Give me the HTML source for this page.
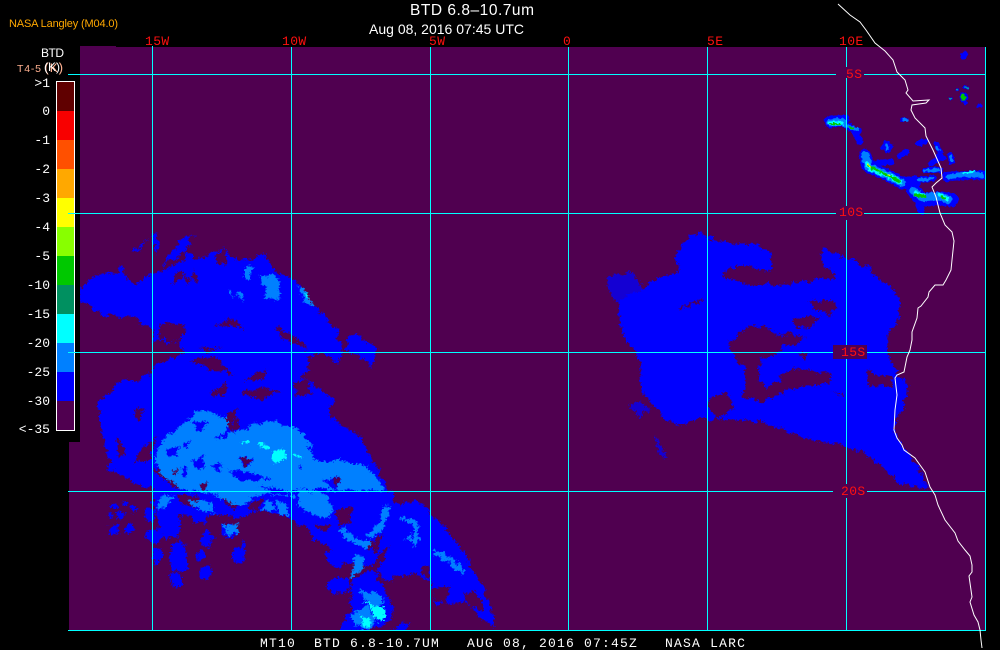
<!DOCTYPE html>
<html><head><meta charset="utf-8"><title>BTD 6.8-10.7um</title>
<style>
html,body{margin:0;padding:0;background:#000;width:1000px;height:650px;overflow:hidden}
svg{display:block}
text{white-space:pre}
.m{font-family:"Liberation Mono",monospace;font-size:13px}
.s{font-family:"Liberation Sans",sans-serif}
.r{fill:#ff1010}
.w{fill:#fff}
</style></head><body>
<svg width="1000" height="650" viewBox="0 0 1000 650" xmlns="http://www.w3.org/2000/svg">
<defs>
<filter id="f" filterUnits="userSpaceOnUse" x="0" y="0" width="1000" height="650" color-interpolation-filters="sRGB">
<feTurbulence type="fractalNoise" baseFrequency="0.14" numOctaves="3" seed="4" result="n"/>
<feDisplacementMap in="SourceGraphic" in2="n" scale="9" xChannelSelector="R" yChannelSelector="G" result="d"/>
<feTurbulence type="fractalNoise" baseFrequency="0.5" numOctaves="2" seed="11" result="n2"/>
<feDisplacementMap in="d" in2="n2" scale="6" xChannelSelector="G" yChannelSelector="R"/>
</filter>
<filter id="f2" filterUnits="userSpaceOnUse" x="0" y="0" width="1000" height="650" color-interpolation-filters="sRGB">
<feTurbulence type="fractalNoise" baseFrequency="0.3" numOctaves="2" seed="7" result="n"/>
<feDisplacementMap in="SourceGraphic" in2="n" scale="4" xChannelSelector="R" yChannelSelector="G"/>
</filter>
<clipPath id="c"><rect x="80" y="47" width="905" height="583"/><rect x="69" y="442" width="12" height="188"/></clipPath>
</defs>
<rect width="1000" height="650" fill="#000"/>
<rect x="80" y="47" width="905" height="583" fill="#500050"/>
<rect x="80" y="46" width="36" height="2" fill="#500050"/>
<rect x="69" y="442" width="12" height="188" fill="#500050"/>

<g clip-path="url(#c)">
<!-- right cloud -->
<g filter="url(#f)"><g transform="translate(600 220) scale(.33333)">
<path fill="#0000ff" d="M270 45 300 38 350 65 420 70 470 70 510 100 520 125 510 150 430 140 380 150 375 175 450 195 560 195 650 175 705 180 705 160 675 140 660 100 675 85 740 115 800 140 870 200 900 240 895 310 860 340 865 395 880 440 890 465 930 495 915 540 890 600 885 640 915 690 950 730 990 810 900 790 850 745 800 700 740 680 620 655 520 620 480 605 400 600 330 600 300 590 240 620 190 590 120 510 125 450 105 390 70 350 55 290 60 240 130 205 170 175 240 150 225 110Z"/>
<path fill="#0000ff" d="M85 550 130 545 150 570 120 590ZM20 170 90 155 130 200 60 270 30 220ZM160 650 175 660 190 690 200 715 180 705Z" opacity=".75"/>
<path fill="#500050" d="M385 365 450 320 500 320 520 345 560 350 610 355 580 380 550 370 545 395 480 420 475 480 500 500 540 480 555 455 600 445 690 460 695 490 610 500 560 510 490 545 430 530 440 480 430 440 395 400Z"/>
<path fill="#500050" d="M620 245 690 240 710 260 690 285 650 270ZM575 295 660 290 620 325 590 320ZM535 335 620 350 570 355ZM240 260 310 235 300 250 240 265ZM800 445 830 465 880 470 875 500 805 500ZM340 530 385 515 405 570 350 595 325 565ZM595 405 625 405 615 415ZM700 515 735 525 715 528ZM380 150 430 140 510 150 500 160 450 190 380 175Z"/>
</g></g>

<!-- left cloud: dark body -->
<g filter="url(#f)">
<g transform="translate(70 220) scale(.33333)">
<path fill="#0000ff" d="M30 210 60 175 100 160 140 160 150 130 165 165 190 195 245 165 280 150 330 125 355 105 400 115 460 85 500 125 520 125 585 100 610 150 660 175 680 185 735 260 770 300 805 330 815 390 810 430 760 400 710 410 720 450 690 470 790 545 780 580 720 600 100 600 75 550 130 510 240 460 260 430 345 400 330 370 250 360 245 325 180 290 100 285 30 240Z"/>
<path fill="#0000ff" d="M830 350 860 340 920 390 905 440 870 405 830 395ZM185 95 235 55 228 66 190 100ZM250 30 266 50 262 110 250 80ZM275 140 330 60 375 42 340 100 290 130Z"/>
<path fill="#500050" d="M265 315 310 310 345 320 330 370 270 355ZM430 320 490 295 525 325 470 320ZM620 320 700 365 710 390 640 360ZM380 385 450 385 430 395ZM430 115 465 85 470 140 440 130ZM300 190 330 150 355 190 375 155 390 190 340 170ZM470 490 480 530 440 540 460 495ZM520 480 590 450 580 490 540 510ZM350 420 430 410 500 465 430 450ZM590 520 640 500 600 540Z"/>
<path fill="#0080ff" d="M525 140 550 140 540 180 525 180ZM575 170 610 160 635 200 630 240 590 235ZM685 200 700 205 735 260 700 240ZM500 220 520 225 520 245ZM475 205 495 225 480 220Z"/>
<path fill="#00ffff" d="M700 224 716 226 718 236 704 234Z"/>
</g>
<g transform="translate(100 380) scale(.33333)">
<path fill="#0000ff" d="M0 60 70 0 620 0 700 60 690 110 780 170 850 300 880 370 910 390 880 480 830 540 700 480 620 440 560 415 520 400 480 385 420 420 350 400 300 430 250 400 180 430 160 380 160 330 110 312 20 310 30 250 0 130Z"/>
<path fill="#500050" d="M55 170 80 230 50 230ZM100 90 130 85 110 120ZM130 200 170 170 150 240 100 250ZM0 290 40 270 110 310 0 330ZM160 270 240 260 280 330 220 320ZM210 200 250 190 230 240ZM380 100 410 90 410 160 380 140ZM330 40 380 10 370 50ZM420 40 480 20 540 30 490 60ZM580 10 620 0 640 40 590 50ZM230 340 300 350 280 380 240 370ZM360 350 430 370 400 390ZM440 380 490 350 480 390Z"/>
<path fill="#0080ff" d="M340 180 430 150 470 130 530 125 590 145 640 190 640 240 720 240 800 260 850 320 870 380 850 440 810 490 770 490 720 450 740 420 800 440 840 390 800 350 730 370 660 420 610 380 570 350 480 340 400 370 340 340 250 330 190 290 165 240 175 190 250 130 300 90 380 110 380 150Z"/>
<path fill="#0000ff" d="M205 205 235 200 230 235 205 225ZM280 240 310 230 310 270 285 270ZM190 130 215 160 185 175ZM270 130 320 125 300 155ZM430 230 460 240 440 260 415 245ZM600 255 610 265 595 268ZM620 200 660 210 640 230ZM390 270 460 280 520 300 470 300 410 300ZM470 320 560 330 600 350 520 340ZM660 300 720 290 710 330ZM680 340 790 370 760 420 690 400ZM330 260 370 250 360 280ZM395 130 410 100 425 150 410 165ZM250 190 270 185 262 205ZM240 270 265 265 255 290Z"/>
<path fill="#500050" d="M430 232 455 240 440 256 420 246ZM300 310 325 305 310 330ZM700 295 720 290 710 320ZM690 350 720 360 705 385ZM398 135 408 110 418 150 408 158ZM215 265 235 270 225 290Z"/>
<path fill="#00ffff" d="M518 212 550 212 565 240 530 248 515 235ZM420 182 452 180 450 190 422 191ZM472 190 510 195 510 205 475 202ZM580 222 605 230 585 236Z"/>
</g>
<g transform="translate(100 490) scale(.33333)">
<g fill="#0000ff">
<circle cx="42" cy="120" r="14"/><circle cx="90" cy="112" r="14"/><circle cx="62" cy="75" r="10"/><circle cx="30" cy="74" r="7"/><circle cx="100" cy="60" r="9"/><circle cx="75" cy="40" r="8"/><circle cx="42" cy="50" r="6"/>
<ellipse cx="165" cy="138" rx="24" ry="22"/><ellipse cx="148" cy="75" rx="16" ry="22"/><ellipse cx="210" cy="105" rx="35" ry="40"/><ellipse cx="172" cy="200" rx="14" ry="25"/>
<path d="M220 160 250 150 258 190 265 240 210 240 210 190Z"/>
<ellipse cx="228" cy="272" rx="18" ry="24"/><ellipse cx="305" cy="195" rx="12" ry="15"/><ellipse cx="316" cy="250" rx="17" ry="17"/><ellipse cx="415" cy="195" rx="22" ry="24"/><circle cx="432" cy="168" r="9"/><ellipse cx="320" cy="145" rx="20" ry="24"/><ellipse cx="388" cy="120" rx="24" ry="26"/><ellipse cx="300" cy="70" rx="32" ry="28"/>
<path d="M575 0 880 0 880 60 850 180 810 230 730 220 690 170 640 150 620 110 590 90Z"/>
<ellipse cx="712" cy="200" rx="32" ry="28"/><ellipse cx="714" cy="287" rx="36" ry="24"/>
<path d="M770 260 820 240 880 350 870 400 800 420 715 420 750 370 750 290Z"/>
<path d="M880 40 950 30 1030 110 1080 170 1130 260 1170 340 1185 410 1150 390 1100 340 1000 340 1000 280 940 250 850 270 820 230 860 150 880 100Z"/>
<path d="M870 420 925 395 920 420Z"/>
</g>
<path fill="#500050" d="M850 180 810 230 830 240 870 170ZM700 70 750 50 760 100 720 110ZM640 100 690 100 680 130ZM1000 300 1050 290 1040 340 1000 330ZM1090 310 1130 300 1150 360 1110 350ZM960 240 990 230 990 270ZM800 165 850 130 830 190Z"/>
<g fill="#0080ff">
<path d="M350 0 460 0 455 30 430 50 380 30ZM590 0 680 10 700 60 680 90 630 70 600 50ZM490 40 520 35 520 60 495 60ZM530 30 565 40 560 80 535 70ZM180 20 220 15 200 50 170 60ZM270 30 330 40 350 70 320 60 280 50ZM370 100 410 100 415 130 385 140ZM750 270 770 190 790 200 790 230ZM780 300 830 310 860 340 830 350 790 330ZM755 360 800 350 830 400 810 420 770 410 755 390Z"/>
<path fill="none" stroke="#0080ff" stroke-width="20" d="M725 120 770 155 810 165M860 50 845 100 810 140"/>
<path fill="none" stroke="#0080ff" stroke-width="14" d="M900 85 950 100 945 160 920 140M1000 185 1050 210 1090 250"/>
</g>
<path fill="#00ffff" d="M790 335 830 345 860 360 845 395 820 385 815 360ZM778 378 810 378 815 410 790 415Z"/>
</g>
</g>

<!-- upper right strands -->
<g filter="url(#f2)"><g transform="translate(800 0) scale(.33333)" fill="none" stroke-linecap="round" stroke-linejoin="round">
<g stroke="#0000ff">
<path stroke-width="36" d="M90 365 130 360"/>
<path stroke-width="20" d="M130 372 175 395M165 395 180 425"/>
<path stroke-width="36" d="M195 465 205 500 260 525 310 550 345 545"/>
<path stroke-width="42" d="M340 570 365 600 420 595 455 600"/>
<path stroke-width="28" d="M440 530 500 525 550 525"/>
<path stroke-width="18" d="M260 430 262 452M300 468 320 455M355 430 375 425M410 435 420 460M450 465 455 485M395 490 425 470M375 510 420 510M340 540 400 535M355 615 365 635M225 490 275 485M490 170 497 162M415 470 430 475M250 440 270 438"/>
<path stroke-width="24" d="M490 288 491 293"/>
<path stroke-width="10" d="M305 360 320 358M450 295 452 295M470 270 472 270M495 262 503 262M535 320 542 316M495 308 497 308"/>
</g>
<g stroke="#0080ff">
<path stroke-width="22" d="M90 368 130 366"/><path stroke-width="12" d="M130 374 170 388"/>
<path stroke-width="24" d="M195 465 205 500 260 525 305 548"/>
<path stroke-width="24" d="M340 572 365 592 420 588 445 600"/>
<path stroke-width="16" d="M445 530 500 522 545 526"/>
<path stroke-width="9" d="M262 435 262 447M312 358 320 360M410 440 415 450M452 470 455 480M375 512 415 510M355 540 395 535"/>
</g>
<g stroke="#00ffff">
<path stroke-width="12" d="M90 370 125 370"/>
<path stroke-width="14" d="M200 490 210 505 260 525 300 545"/>
<path stroke-width="12" d="M345 578 370 588M420 585 440 596"/>
<path stroke-width="7" d="M490 518 520 515"/>
</g>
<g stroke="#00c800">
<path stroke-width="6" d="M90 372 120 372M150 382 160 385"/>
<path stroke-width="8" d="M205 498 240 515 300 545"/>
<path stroke-width="8" d="M345 585 375 590M425 590 435 595"/>
<path stroke-width="16" d="M489 290 490 292"/>
</g>
<path stroke="#ffff00" stroke-width="5" d="M204 496 212 503M266 523 270 526"/>
<g stroke="#00a0a0" stroke-width="6">
<path d="M470 270 471 270M447 295 452 295M498 262 503 262"/>
</g>
</g></g>
</g>

<!-- legend -->
<rect x="56" y="81" width="19" height="350" fill="#fff"/>
<rect x="57" y="82" width="17" height="29" fill="#600000"/>
<rect x="57" y="111" width="17" height="29" fill="#f80000"/>
<rect x="57" y="140" width="17" height="29" fill="#ff5000"/>
<rect x="57" y="169" width="17" height="29" fill="#ffa800"/>
<rect x="57" y="198" width="17" height="29" fill="#ffff00"/>
<rect x="57" y="227" width="17" height="29" fill="#88ff00"/>
<rect x="57" y="256" width="17" height="29" fill="#00c800"/>
<rect x="57" y="285" width="17" height="29" fill="#009060"/>
<rect x="57" y="314" width="17" height="29" fill="#00ffff"/>
<rect x="57" y="343" width="17" height="29" fill="#0080ff"/>
<rect x="57" y="372" width="17" height="29" fill="#0000ff"/>
<rect x="57" y="401" width="17" height="29" fill="#500050"/>

<!-- grid -->
<g fill="#00ffff">
<rect x="152" y="46" width="1" height="584"/><rect x="291" y="47" width="1" height="583"/><rect x="430" y="47" width="1" height="583"/><rect x="568" y="47" width="1" height="583"/><rect x="707" y="47" width="1" height="583"/><rect x="846" y="47" width="1" height="583"/>
<rect x="985" y="47" width="1" height="584"/>
<rect x="68" y="74" width="918" height="1"/><rect x="68" y="213" width="918" height="1"/><rect x="68" y="352" width="918" height="1"/><rect x="68" y="491" width="918" height="1"/><rect x="68" y="630" width="918" height="1"/>
</g>
<g fill="#500050">
<rect x="836" y="67" width="28" height="11"/><rect x="836" y="206" width="28" height="14"/><rect x="833" y="345" width="34" height="14"/><rect x="833" y="484" width="34" height="14"/>
</g>

<!-- coast -->
<path fill="none" stroke="#fff" stroke-width="1" d="M838 4 850 15 860 22 866 30 875 43 885 51 893 60 897 72 905 80 908 90 906 93 913 101 929 100 926 103 912 105 911 110 915 118 925 128 926 136 933 150 941 168 942 178 936 183 932 187 936 197 940 213 945 225 952 232 954 241 952 260 951 270 946 280 943 285 935 285 929 292 928 297 921 306 918 308 917 318 912 332 912 340 910 350 907 357 904 372 897 375 895 378 897 395 895 410 894 430 897 438 902 445 904 450 915 458 920 465 925 472 930 487 935 495 938 505 945 520 955 533 958 541 965 550 970 556 972 565 972 572 969 576 971 590 972 597 970 602 974 615 978 622 980 630 981 640 982 648"/>

<!-- labels -->
<g class="m r">
<text x="145" y="45" letter-spacing=".4">15W</text>
<text x="282" y="45" letter-spacing=".4">10W</text>
<text x="429" y="45" letter-spacing=".4">5W</text>
<text x="563" y="45">0</text>
<text x="707" y="45" letter-spacing=".4">5E</text>
<text x="839" y="45" letter-spacing=".4">10E</text>
<text x="846" y="78" letter-spacing=".4">5S</text>
<text x="839" y="216" letter-spacing=".4">10S</text>
<text x="841" y="356" letter-spacing=".4">15S</text>
<text x="841" y="495" letter-spacing=".4">20S</text>
</g>
<g class="m w" text-anchor="end">
<text x="50" y="87">&gt;1</text>
<text x="50" y="115">0</text>
<text x="50" y="144">-1</text>
<text x="50" y="173">-2</text>
<text x="50" y="202">-3</text>
<text x="50" y="231">-4</text>
<text x="50" y="260">-5</text>
<text x="50" y="289">-10</text>
<text x="50" y="318">-15</text>
<text x="50" y="347">-20</text>
<text x="50" y="376">-25</text>
<text x="50" y="405">-30</text>
<text x="50" y="433">&lt;-35</text>
</g>
<text class="s" x="41" y="57" font-size="12" fill="#fff" textLength="23">BTD</text>
<text class="s" x="17" y="72" font-size="10.5" fill="#ffb090" textLength="24">T4-5</text>
<text class="m" x="43" y="72" fill="#ffb090" letter-spacing="-1">(K)</text>
<text class="s" x="44" y="71" font-size="12" fill="#fff">(K)</text>
<text class="s" x="9" y="27" font-size="11" fill="#ffa800" textLength="109">NASA Langley (M04.0)</text>
<text class="s" x="410" y="15" font-size="15.5" fill="#fff" textLength="124">BTD 6.8–10.7um</text>
<text class="s" x="369" y="34" font-size="14" fill="#fff" textLength="155">Aug 08, 2016 07:45 UTC</text>
<text class="m w" x="260" y="647" letter-spacing="1.2">MT10  BTD 6.8-10.7UM   AUG 08, 2016 07:45Z   NASA LARC</text>
</svg>
</body></html>
